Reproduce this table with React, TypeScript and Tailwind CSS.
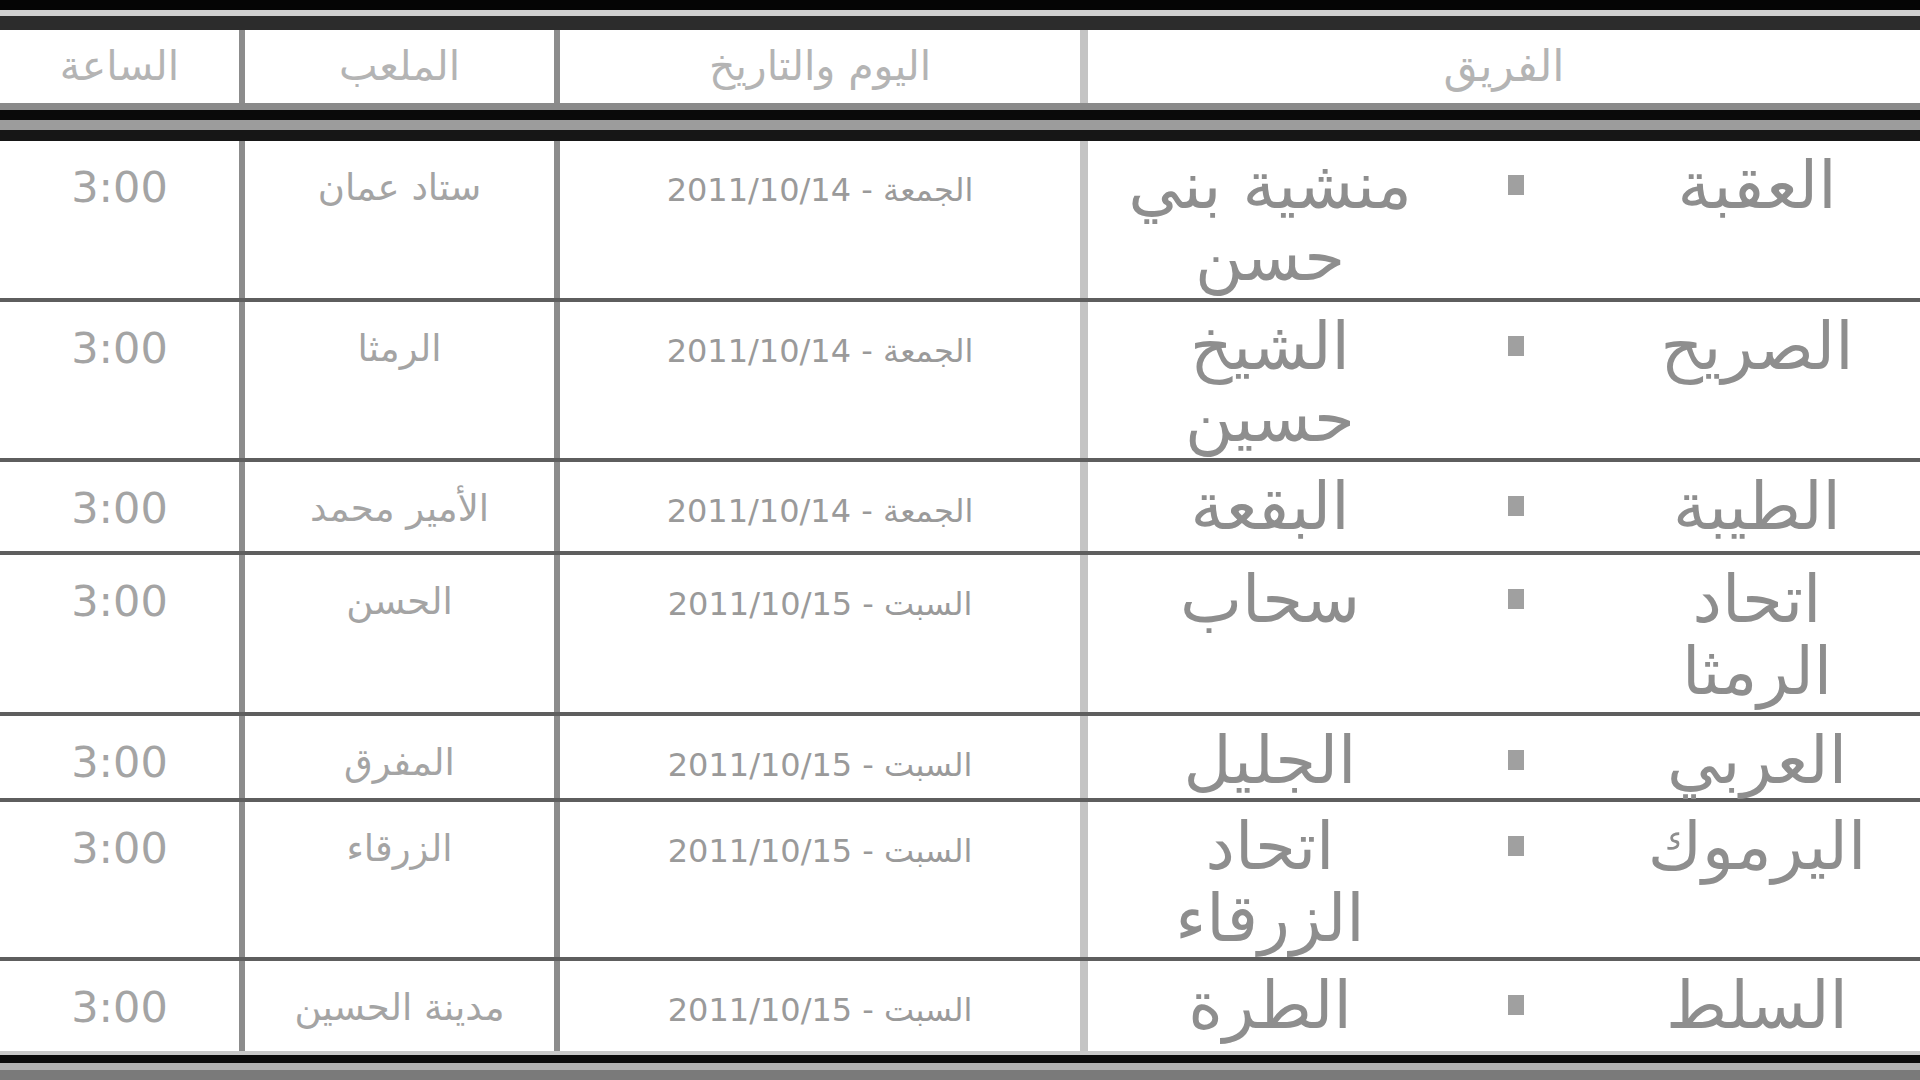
import React from "react";

type Row = {
  h: string;
  home: string;
  away: string;
  date: string;
  stadium: string;
  time: string;
  last?: boolean;
};

const rows: Row[] = [
  { h: "h-[161px]", home: "العقبة", away: "منشية بني حسن", date: "الجمعة - 2011/10/14", stadium: "ستاد عمان", time: "3:00" },
  { h: "h-[160px]", home: "الصريح", away: "الشيخ حسين", date: "الجمعة - 2011/10/14", stadium: "الرمثا", time: "3:00" },
  { h: "h-[93px]", home: "الطيبة", away: "البقعة", date: "الجمعة - 2011/10/14", stadium: "الأمير محمد", time: "3:00" },
  { h: "h-[161px]", home: "اتحاد الرمثا", away: "سحاب", date: "السبت - 2011/10/15", stadium: "الحسن", time: "3:00" },
  { h: "h-[86px]", home: "العربي", away: "الجليل", date: "السبت - 2011/10/15", stadium: "المفرق", time: "3:00" },
  { h: "h-[159px]", home: "اليرموك", away: "اتحاد الزرقاء", date: "السبت - 2011/10/15", stadium: "الزرقاء", time: "3:00" },
  { h: "h-[90px]", home: "السلط", away: "الطرة", date: "السبت - 2011/10/15", stadium: "مدينة الحسين", time: "3:00", last: true },
];

const grid = "grid grid-cols-[840px_526px_315px_239px]";

export default function App() {
  return (
    <div
      dir="rtl"
      className="w-[1920px] h-[1080px] bg-white flex flex-col overflow-hidden font-['DejaVu_Sans',sans-serif]"
    >
      <div className="h-[10px] bg-[#050505]" />
      <div className="h-[6px] bg-[#cfcfcf]" />
      <div className="h-[14px] bg-[#2c2c2c]" />

      {/* header */}
      <div className={`${grid} h-[73px]`}>
        <div className="border-l-[8px] border-[#c4c4c4] text-center text-[44px] leading-[72px] text-[#b4b4b4]">الفريق</div>
        <div className="border-l-[6px] border-[#8c8c8c] text-center text-[41px] leading-[72px] text-[#b4b4b4]">اليوم والتاريخ</div>
        <div className="border-l-[6px] border-[#8c8c8c] text-center text-[41px] leading-[72px] text-[#b4b4b4]">الملعب</div>
        <div className="text-center text-[41px] leading-[72px] text-[#b4b4b4]">الساعة</div>
      </div>

      {/* thick separator */}
      <div className="h-[7px] bg-[#8a8a8a]" />
      <div className="h-[10px] bg-[#0a0a0a]" />
      <div className="h-[10px] bg-[#9c9c9c]" />
      <div className="h-[11px] bg-[#161616]" />

      {rows.map((r, i) => (
        <div
          key={i}
          className={`${grid} ${r.h} ${r.last ? "" : "border-b-4 border-[#5e5e5e]"}`}
        >
          <div className="border-l-[8px] border-[#c4c4c4] flex items-start pt-[9px] text-[66px] leading-[72px] text-[#8e8e8e]">
            <div className="w-[250px] mr-[38px] text-center">{r.home}</div>
            <div className="w-[212px] flex justify-center pt-[25px]">
              <div className="w-[16px] h-[20px] mr-[20px] bg-[#a0a0a0]" />
            </div>
            <div className="w-[300px] text-center">{r.away}</div>
          </div>
          <div className="border-l-[6px] border-[#8c8c8c] text-center pt-[24px] text-[32px] leading-[50px] text-[#9a9a9a]">
            {r.date}
          </div>
          <div className="border-l-[6px] border-[#8c8c8c] text-center pt-[22px] text-[37px] leading-[50px] text-[#a4a4a4]">
            {r.stadium}
          </div>
          <div className="text-center pt-[21px] text-[43px] leading-[50px] text-[#a4a4a4]">{r.time}</div>
        </div>
      ))}

      <div className="h-[4px] bg-[#c8c8c8]" />
      <div className="h-[8px] bg-[#0a0a0a]" />
      <div className="h-[7px] bg-[#b0b0b0]" />
      <div className="flex-1 bg-[#7a7a7a]" />
    </div>
  );
}
